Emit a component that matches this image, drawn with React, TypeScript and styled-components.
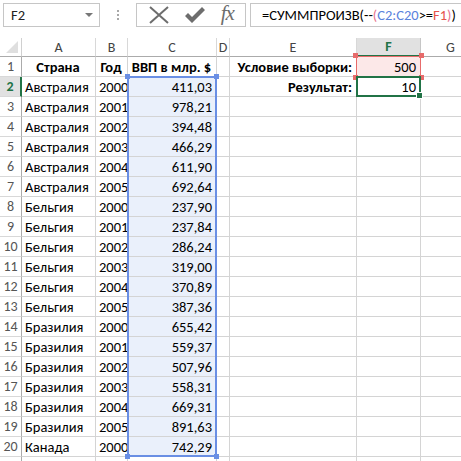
import React from "react";
import styled, { createGlobalStyle, css } from "styled-components";

const GlobalStyle = createGlobalStyle`
  html, body {
    margin: 0;
    padding: 0;
    background: #ffffff;
    overflow: hidden;
  }
  body {
    font-family: "Calibri", "Carlito", "Liberation Sans", Arial, sans-serif;
    color: #000;
  }
`;

const COLS = [22, 74, 32, 89, 13, 127, 64, 60];
const HEAD_H = 19;
const ROW_H = 20;
const LETTERS = ["A", "B", "C", "D", "E", "F", "G"];

const data: [string, string, string][] = [
  ["Австралия", "2000", "411,03"],
  ["Австралия", "2001", "978,21"],
  ["Австралия", "2002", "394,48"],
  ["Австралия", "2003", "466,29"],
  ["Австралия", "2004", "611,90"],
  ["Австралия", "2005", "692,64"],
  ["Бельгия", "2000", "237,90"],
  ["Бельгия", "2001", "237,84"],
  ["Бельгия", "2002", "286,24"],
  ["Бельгия", "2003", "319,00"],
  ["Бельгия", "2004", "370,89"],
  ["Бельгия", "2005", "387,36"],
  ["Бразилия", "2000", "655,42"],
  ["Бразилия", "2001", "559,37"],
  ["Бразилия", "2002", "507,96"],
  ["Бразилия", "2003", "558,31"],
  ["Бразилия", "2004", "669,31"],
  ["Бразилия", "2005", "891,63"],
  ["Канада", "2000", "742,29"],
];

const Page = styled.div`
  width: 461px;
  height: 461px;
  overflow: hidden;
  position: relative;
`;

const Toolbar = styled.div`
  display: flex;
  align-items: center;
  height: 24px;
  padding: 3px 0 0 3px;
`;

const NameBox = styled.div`
  box-sizing: border-box;
  width: 97px;
  height: 24px;
  border: 1px solid #c6c6c6;
  display: flex;
  align-items: center;
  justify-content: space-between;
  padding: 0 6px 0 7px;
  font-size: 14.5px;
  color: #222;
`;

const Caret = styled.span`
  width: 0;
  height: 0;
  border-left: 4px solid transparent;
  border-right: 4px solid transparent;
  border-top: 4px solid #777;
`;

const Dots = styled.div`
  width: 36px;
  display: flex;
  flex-direction: column;
  align-items: center;
  gap: 2px;

  span {
    width: 2px;
    height: 2px;
    background: #a8a8a8;
  }
`;

const ButtonBox = styled.div`
  box-sizing: border-box;
  width: 110px;
  height: 24px;
  border: 1px solid #c6c6c6;
  display: flex;
  align-items: center;
  justify-content: space-around;
  padding: 0 4px;
`;

const Fx = styled.span`
  font-family: "Liberation Serif", "Times New Roman", serif;
  font-style: italic;
  font-size: 21px;
  color: #6d6d6d;
  letter-spacing: -1px;
  margin-top: -3px;
`;

const FormulaBox = styled.div`
  box-sizing: border-box;
  flex: 1;
  height: 24px;
  margin-left: 4px;
  border: 1px solid #c6c6c6;
  border-right: none;
  display: flex;
  align-items: center;
  padding-left: 11px;
  font-size: 14.5px;
  white-space: nowrap;
`;

const Tok = styled.span<{ $c: string }>`
  color: ${(p) => p.$c};
`;

const Sheet = styled.div`
  position: relative;
  margin-top: 11px;
  display: grid;
  grid-template-columns: ${COLS.map((c) => c + "px").join(" ")};
  grid-template-rows: ${HEAD_H}px;
  grid-auto-rows: ${ROW_H}px;
`;

const Corner = styled.div`
  box-sizing: border-box;
  border-right: 1px solid #d0d0d0;
  border-bottom: 1px solid #ababab;
  position: relative;

  &::after {
    content: "";
    position: absolute;
    right: 3px;
    bottom: 3px;
    width: 0;
    height: 0;
    border-left: 12px solid transparent;
    border-bottom: 12px solid #dfdfdf;
  }
`;

const ColHead = styled.div<{ $active?: boolean }>`
  box-sizing: border-box;
  display: flex;
  align-items: center;
  justify-content: center;
  font-size: 14px;
  color: #444;
  border-right: 1px solid #d8d8d8;
  border-bottom: 1px solid #ababab;
  ${(p) =>
    p.$active &&
    css`
      background: #e1e1e1;
      color: #217346;
      font-weight: bold;
      border-bottom: 2px solid #217346;
      border-right-color: #c6c6c6;
    `}
`;

const RowHead = styled.div<{ $active?: boolean }>`
  box-sizing: border-box;
  display: flex;
  align-items: center;
  justify-content: center;
  font-size: 14px;
  color: #555;
  border-right: 1px solid #ababab;
  border-bottom: 1px solid #d8d8d8;
  ${(p) =>
    p.$active &&
    css`
      background: #e1e1e1;
      color: #217346;
      font-weight: bold;
      border-right: 2px solid #217346;
    `}
`;

const Cell = styled.div<{ $align?: "left" | "right" | "center"; $bold?: boolean; $fill?: string }>`
  box-sizing: border-box;
  display: flex;
  align-items: center;
  justify-content: ${(p) =>
    p.$align === "right" ? "flex-end" : p.$align === "center" ? "center" : "flex-start"};
  padding: 1px 4px 0 3px;
  font-size: 14.5px;
  font-weight: ${(p) => (p.$bold ? "bold" : "normal")};
  background: ${(p) => p.$fill || "transparent"};
  border-right: 1px solid #d4d4d4;
  border-bottom: 1px solid #d4d4d4;
  white-space: nowrap;
  overflow: visible;
`;

const RangeFrame = styled.div<{ $color: string; $w: number }>`
  position: absolute;
  box-sizing: border-box;
  border: ${(p) => p.$w}px solid ${(p) => p.$color};
  pointer-events: none;
`;

const Handle = styled.span<{ $color: string; $pos: string }>`
  position: absolute;
  width: 5px;
  height: 5px;
  background: ${(p) => p.$color};
  ${(p) => (p.$pos.includes("t") ? "top: -4px;" : "bottom: -4px;")}
  ${(p) => (p.$pos.includes("l") ? "left: -4px;" : "right: -4px;")}
`;

const FillHandle = styled.span`
  position: absolute;
  right: -4px;
  bottom: -4px;
  width: 5px;
  height: 5px;
  background: #217346;
  border: 1px solid #fff;
`;

const colLeft = (i: number) => COLS.slice(0, i).reduce((a, b) => a + b, 0);
const rowTop = (r: number) => HEAD_H + (r - 1) * ROW_H;

function CancelIcon() {
  return (
    <svg width="22" height="18" viewBox="0 0 22 18">
      <path d="M2 1 L20 17 M20 1 L2 17" stroke="#6d6d6d" strokeWidth="2" fill="none" />
    </svg>
  );
}

function EnterIcon() {
  return (
    <svg width="22" height="18" viewBox="0 0 22 18">
      <path d="M1 10 L4 7 L8 11 L18 1 L21 4 L8 17 Z" fill="#6d6d6d" />
    </svg>
  );
}

export default function App() {
  const blue = "#6a8fe4";
  const red = "#e76b6b";
  const cLeft = colLeft(3);
  const fLeft = colLeft(6);

  const rows: React.ReactNode[] = [];
  for (let r = 1; r <= 21; r++) {
    const d = r >= 2 && r <= 20 ? data[r - 2] : null;
    rows.push(
      <RowHead key={"h" + r} $active={r === 2}>
        {r <= 20 ? r : ""}
      </RowHead>
    );
    if (r === 1) {
      rows.push(
        <Cell key="a1" $align="center" $bold>Страна</Cell>,
        <Cell key="b1" $align="center" $bold>Год</Cell>,
        <Cell key="c1" $align="center" $bold>ВВП в млр. $</Cell>,
        <Cell key="d1" />,
        <Cell key="e1" $align="right" $bold>Условие выборки:</Cell>,
        <Cell key="f1" $align="right" $fill="#fce8e8">500</Cell>,
        <Cell key="g1" />
      );
    } else {
      rows.push(
        <Cell key={"a" + r}>{d ? d[0] : ""}</Cell>,
        <Cell key={"b" + r}>{d ? d[1] : ""}</Cell>,
        <Cell key={"c" + r} $align="right" $fill={d ? "#eaf0fb" : undefined}>
          {d ? d[2] : ""}
        </Cell>,
        <Cell key={"d" + r} />,
        <Cell key={"e" + r} $align="right" $bold>{r === 2 ? "Результат:" : ""}</Cell>,
        <Cell key={"f" + r} $align="right">{r === 2 ? "10" : ""}</Cell>,
        <Cell key={"g" + r} />
      );
    }
  }

  return (
    <Page>
      <GlobalStyle />
      <Toolbar>
        <NameBox>
          F2
          <Caret />
        </NameBox>
        <Dots>
          <span />
          <span />
          <span />
        </Dots>
        <ButtonBox>
          <CancelIcon />
          <EnterIcon />
          <Fx>fx</Fx>
        </ButtonBox>
        <FormulaBox>
          <Tok $c="#000">=СУММПРОИЗВ(--</Tok>
          <Tok $c="#e8748f">(</Tok>
          <Tok $c="#5a82dc">C2:C20</Tok>
          <Tok $c="#000">&gt;=</Tok>
          <Tok $c="#e5534b">F1</Tok>
          <Tok $c="#e8748f">)</Tok>
          <Tok $c="#000">)</Tok>
        </FormulaBox>
      </Toolbar>
      <Sheet>
        <Corner />
        {LETTERS.map((l) => (
          <ColHead key={l} $active={l === "F"}>
            {l}
          </ColHead>
        ))}
        {rows}

        <RangeFrame
          $color={blue}
          $w={2}
          style={{ left: cLeft - 1, top: rowTop(2) - 1, width: COLS[3] + 1, height: 19 * ROW_H + 1 }}
        >
          <Handle $color={blue} $pos="tl" />
          <Handle $color={blue} $pos="tr" />
          <Handle $color={blue} $pos="bl" />
          <Handle $color={blue} $pos="br" />
        </RangeFrame>

        <RangeFrame
          $color={red}
          $w={1}
          style={{ left: fLeft - 1, top: rowTop(1) - 1, width: COLS[6] + 1, height: ROW_H + 1 }}
        >
          <Handle $color={red} $pos="tl" />
          <Handle $color={red} $pos="tr" />
          <Handle $color={red} $pos="bl" />
          <Handle $color={red} $pos="br" />
        </RangeFrame>

        <RangeFrame
          $color="#217346"
          $w={2}
          style={{ left: fLeft - 1, top: rowTop(2) - 1, width: COLS[6] + 1, height: ROW_H + 1 }}
        >
          <FillHandle />
        </RangeFrame>
      </Sheet>
    </Page>
  );
}
